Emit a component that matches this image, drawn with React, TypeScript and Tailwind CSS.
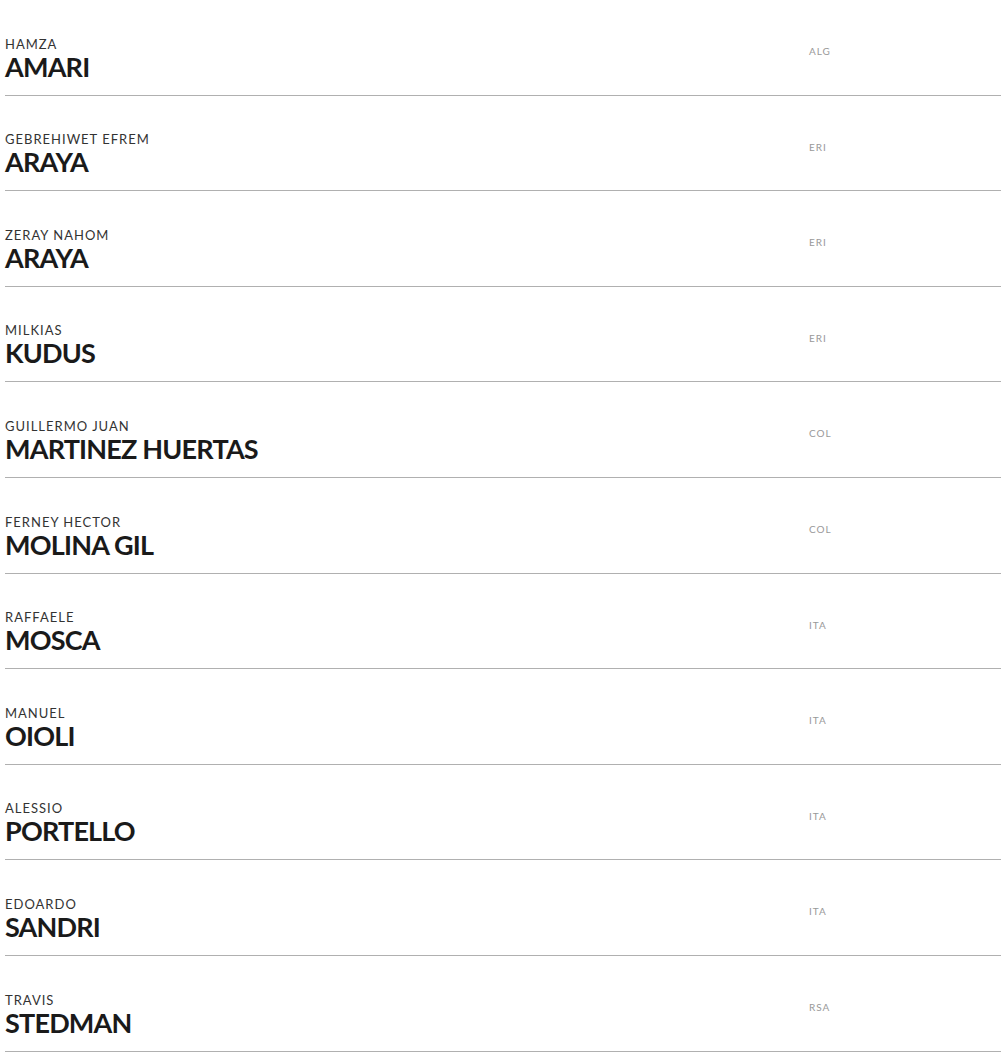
const riders = [
  { first: "HAMZA", last: "AMARI", nat: "ALG" },
  { first: "GEBREHIWET EFREM", last: "ARAYA", nat: "ERI" },
  { first: "ZERAY NAHOM", last: "ARAYA", nat: "ERI" },
  { first: "MILKIAS", last: "KUDUS", nat: "ERI" },
  { first: "GUILLERMO JUAN", last: "MARTINEZ HUERTAS", nat: "COL" },
  { first: "FERNEY HECTOR", last: "MOLINA GIL", nat: "COL" },
  { first: "RAFFAELE", last: "MOSCA", nat: "ITA" },
  { first: "MANUEL", last: "OIOLI", nat: "ITA" },
  { first: "ALESSIO", last: "PORTELLO", nat: "ITA" },
  { first: "EDOARDO", last: "SANDRI", nat: "ITA" },
  { first: "TRAVIS", last: "STEDMAN", nat: "RSA" },
]

export default function App() {
  return (
    <div className="w-[1006px] min-h-[1064px] bg-white px-[5px] font-['Lato',sans-serif]">
      <ul className="w-[996px]">
        {riders.map((r, i) => (
          <li
            key={i}
            className="h-[95.6px] flex border-b border-[#b0b0b0]"
          >
            <div className="flex-1 flex flex-col justify-end pb-[14px]">
              <span className="text-[13px] leading-[17px] tracking-[1px] text-[#333]">
                {r.first}
              </span>
              <span className="text-[27px] leading-[28px] font-bold tracking-[-0.8px] text-[#1a1a1a]">
                {r.last}
              </span>
            </div>
            <div className="w-[192px] pt-[46px] text-[10px] leading-[10px] tracking-[1px] text-[#999]">
              {r.nat}
            </div>
          </li>
        ))}
      </ul>
    </div>
  )
}
